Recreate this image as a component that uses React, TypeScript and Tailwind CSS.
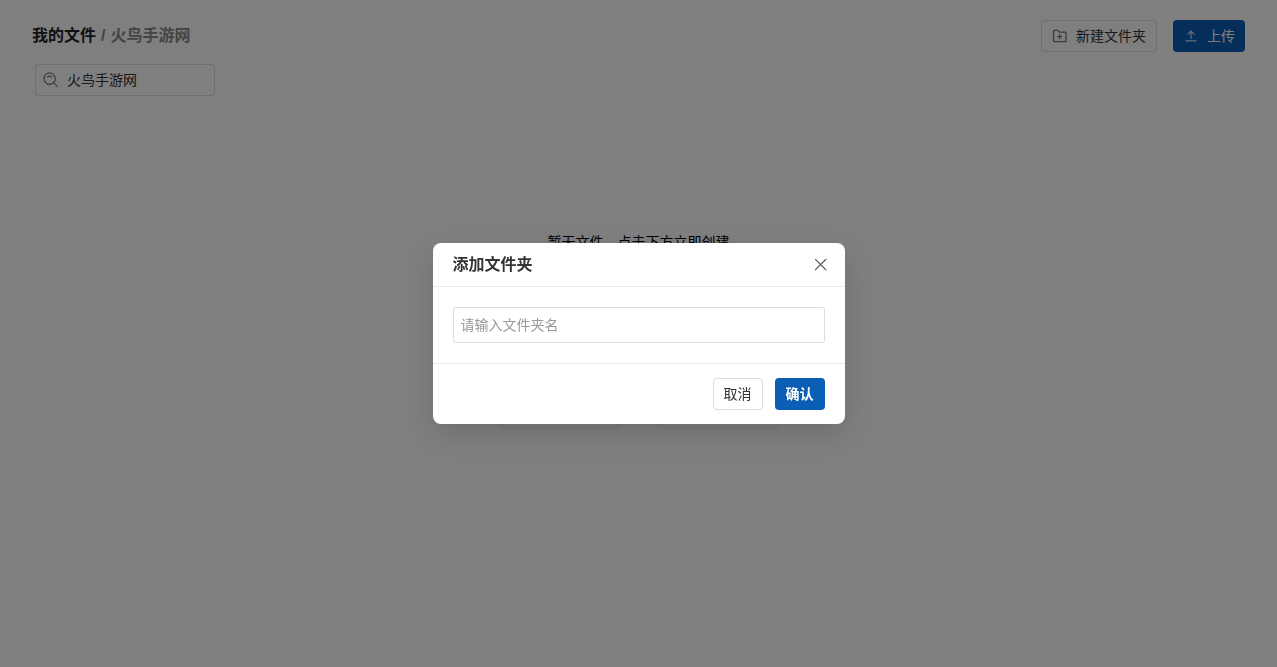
import { useState } from "react";

function SearchIcon() {
  return (
    <svg className="size-4 shrink-0 text-[#777]" viewBox="0 0 16 16" fill="none" stroke="currentColor" strokeLinecap="round" strokeWidth="1.2" aria-hidden="true">
      <circle cx="6.6" cy="6.6" r="5.7" />
      <path d="M10.9 10.9l3.4 3.4M4.5 5Q6.6 3.4 8.7 5" />
    </svg>
  );
}

function FolderPlusIcon() {
  return (
    <svg className="size-4 shrink-0 text-[#777]" viewBox="0 0 16 16" fill="none" stroke="currentColor" strokeLinejoin="round" strokeWidth="1.3" aria-hidden="true">
      <path d="M1.5 3.2q0-.9.9-.9h3.3l1.6 1.9h5.8q.9 0 .9.9v7.7q0 .9-.9.9H2.4q-.9 0-.9-.9z" />
      <path d="M7.7 6.2v5M5.2 8.7h5" />
    </svg>
  );
}

function UploadIcon() {
  return (
    <svg className="size-3 shrink-0 opacity-80" viewBox="0 0 12 12" fill="none" stroke="currentColor" strokeWidth="1.2" aria-hidden="true">
      <path d="M6 8.7V1.2M2.6 4.5 6 1.1l3.4 3.4M.5 10.8h11" />
    </svg>
  );
}

function CloseIcon() {
  return (
    <svg className="size-3" viewBox="0 0 12 12" fill="none" stroke="currentColor" strokeLinecap="round" strokeWidth="1.2" aria-hidden="true">
      <path d="m.3.3 10.6 10.6M10.9.3.3 10.9" />
    </svg>
  );
}

function FolderDialog({ onClose }: { onClose: () => void }) {
  return (
    <div className="fixed inset-0 flex items-center justify-center bg-black/50">
      <form
        role="dialog"
        aria-modal="true"
        aria-labelledby="dialog-title"
        className="w-[412px] rounded-lg bg-white shadow-[0_10px_30px_rgba(0,0,0,0.14)]"
        onSubmit={(event) => {
          event.preventDefault();
          onClose();
        }}
      >
        <header className="flex h-11 items-center justify-between border-b border-[#ebebeb] pr-[17px] pl-5">
          <h2 id="dialog-title" className="text-base font-bold text-[#333]">添加文件夹</h2>
          <button type="button" aria-label="关闭" className="p-px text-[#555]" onClick={onClose}>
            <CloseIcon />
          </button>
        </header>
        <div className="p-5">
          <input
            type="text"
            aria-label="文件夹名"
            placeholder="请输入文件夹名"
            className="block h-9 w-full rounded-[3px] border border-[#dcdcdc] px-[7px] text-sm text-[#333] outline-none placeholder:text-[#999]"
          />
        </div>
        <footer className="flex justify-end gap-3 border-t border-[#ebebeb] px-5 py-3.5">
          <button type="button" className="h-8 w-[50px] rounded border border-[#dcdcdc] bg-white text-sm text-[#333]" onClick={onClose}>
            取消
          </button>
          <button type="submit" className="h-8 w-[50px] rounded bg-[#0a5fb4] text-sm font-bold text-white">
            确认
          </button>
        </footer>
      </form>
    </div>
  );
}

export default function App() {
  const [open, setOpen] = useState(true);
  return (
    <div className="min-h-screen bg-white font-['Liberation_Sans','Noto_Sans_CJK_SC',sans-serif] text-sm text-black">
      <header className="flex items-center justify-between px-8 pt-5">
        <h1 className="flex gap-[5px] text-base font-bold text-[#222]">
          <a href="#files">我的文件</a>
          <span className="text-[#888]">/</span>
          <span className="text-[#888]">火鸟手游网</span>
        </h1>
        <div className="flex gap-4">
          <button type="button" className="flex h-8 items-center gap-2 rounded border border-[#dcdcdc] px-2.5 text-[#333]" onClick={() => setOpen(true)}>
            <FolderPlusIcon />
            新建文件夹
          </button>
          <button type="button" className="flex h-8 items-center gap-2.5 rounded bg-[#0a5fb4] pr-2.5 pl-3 text-white">
            <UploadIcon />
            上传
          </button>
        </div>
      </header>
      <div className="mt-3 px-[35px]">
        <label className="flex h-8 w-[180px] items-center gap-2 rounded-[3px] border border-[#dcdcdc] px-[7px]">
          <SearchIcon />
          <input type="text" aria-label="搜索文件" defaultValue="火鸟手游网" className="min-w-0 flex-1 text-[#333] outline-none" />
        </label>
      </div>
      <main className="flex flex-col items-center pt-[136px]">
        <p>暂无文件，点击下方立即创建</p>
        <div className="mt-5 flex gap-[30px]">
          <button type="button" aria-label="新建文件夹" className="h-[158px] w-32 rounded-lg bg-[#f7f7f7]" onClick={() => setOpen(true)} />
          <button type="button" aria-label="上传文件" className="h-[158px] w-32 rounded-lg bg-[#f7f7f7]" />
        </div>
      </main>
      {open && <FolderDialog onClose={() => setOpen(false)} />}
    </div>
  );
}
